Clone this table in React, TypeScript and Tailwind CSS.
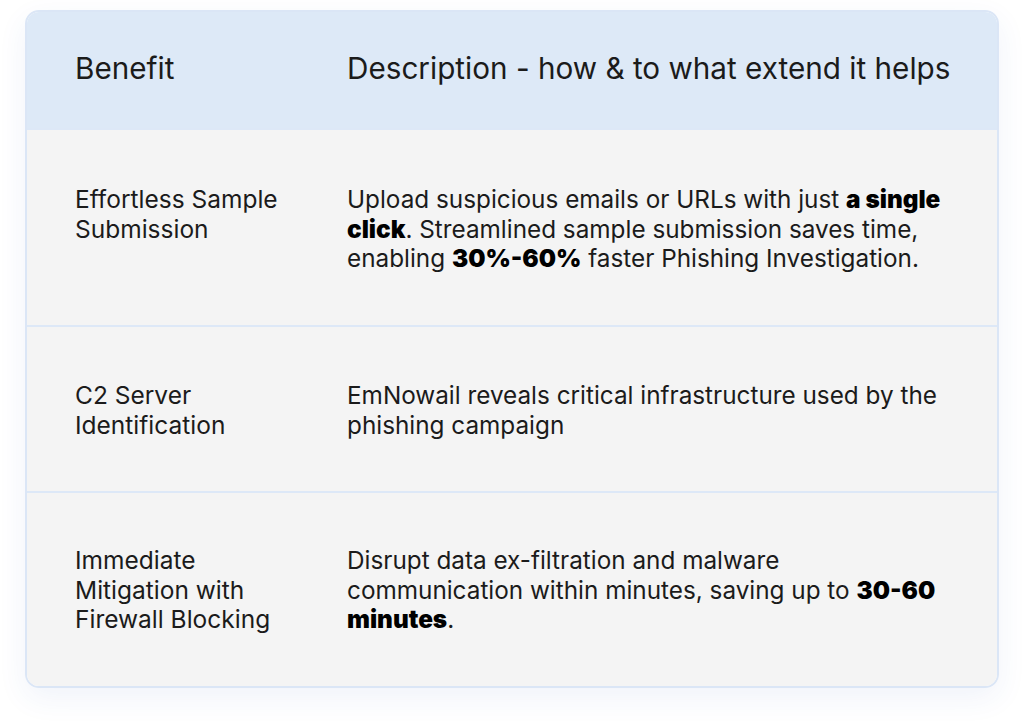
import React from "react";

const rows = [
  {
    title: ["Effortless Sample", "Submission"],
    desc: (
      <>
        Upload suspicious emails or URLs with just <b className="font-black text-black">a single click</b>. Streamlined
        sample submission saves time, enabling <b className="font-black text-black whitespace-nowrap">30%-60%</b> faster
        Phishing Investigation.
      </>
    ),
    h: "h-[197px]",
    pt: "pt-[55px]",
  },
  {
    title: ["C2 Server", "Identification"],
    desc: <>EmNowail reveals critical infrastructure used by the phishing campaign</>,
    h: "h-[166px]",
    pt: "pt-[54px]",
  },
  {
    title: ["Immediate", "Mitigation with", "Firewall Blocking"],
    desc: (
      <>
        Disrupt data ex-filtration and malware communication within minutes, saving up to{" "}
        <b className="font-black text-black whitespace-nowrap">30-60</b> <b className="font-black text-black">minutes</b>.
      </>
    ),
    h: "h-[195px]",
    pt: "pt-[53px]",
  },
];

export default function App() {
  return (
    <div className="w-[1024px] h-[727px] bg-white pt-[10px] pl-[25px] font-['Inter','Noto_Sans',sans-serif] text-[#1b1b1b]">
      <div className="w-[974px] rounded-[14px] border-2 border-[#dbe6f6] overflow-hidden shadow-[0_10px_30px_rgba(40,90,190,0.07)]">
        <div className="flex items-start pt-[38px] h-[116px] bg-[#dde9f7] text-[29.7px] leading-[36px]">
          <div className="w-[320px] pl-[48px]">Benefit</div>
          <div className="whitespace-nowrap">Description - how &amp; to what extend it helps</div>
        </div>
        {rows.map((r, i) => (
          <div
            key={i}
            className={`flex items-start bg-[#f4f4f4] border-t-2 border-[#dde8f7] leading-[29.5px] ${r.h} ${r.pt}`}
          >
            <div className="w-[320px] pl-[48px] pr-[20px] text-[24.5px]">
              {r.title.map((t, j) => (
                <div key={j}>{t}</div>
              ))}
            </div>
            <div className="w-[602px] text-[24.3px]">{r.desc}</div>
          </div>
        ))}
      </div>
    </div>
  );
}
